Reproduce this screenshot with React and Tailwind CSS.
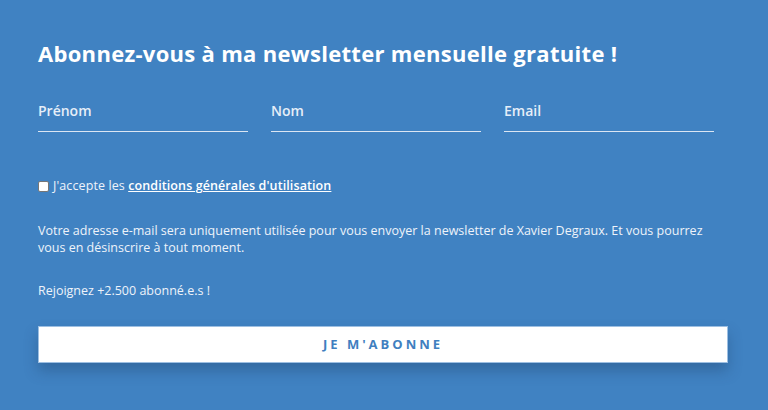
export default function App() {
  return (
    <div className="w-[768px] h-[410px] bg-[#4082c2] text-white overflow-hidden" style={{ fontFamily: '"Open Sans", sans-serif' }}>
      <div className="pl-[38px] pr-[41px] pt-[38px]">
        <h1 className="text-[22px] font-bold leading-[30px] tracking-[0.3px]">Abonnez-vous à ma newsletter mensuelle gratuite !</h1>
        <div className="mt-[26px] flex gap-[23px] pr-[13px]">
          {["Prénom", "Nom", "Email"].map((p) => (
            <div key={p} className="w-[210px] border-b border-[#dbe6f3] pb-[10px] pt-[7px]">
              <span className="text-[14px] font-semibold text-[#e6eef8] leading-[20px] block">{p}</span>
            </div>
          ))}
        </div>
        <div className="mt-[45px] flex items-center gap-[4px] text-[12.5px] leading-[18px]">
          <span className="w-[11px] h-[11px] bg-white border border-[#767676] rounded-[2px] inline-block"></span>
          <span className="text-[#eef3fa] tracking-[0.1px]">J'accepte les <a className="font-semibold underline text-white">conditions générales d'utilisation</a></span>
        </div>
        <p className="mt-[27px] text-[12.5px] leading-[17px] text-[#eef3fa]">
          Votre adresse e-mail sera uniquement utilisée pour vous envoyer la newsletter de Xavier Degraux. Et vous pourrez vous en désinscrire à tout moment.
        </p>
        <p className="mt-[26px] text-[12.5px] leading-[17px] text-[#eef3fa]">Rejoignez +2.500 abonné.e.s !</p>
        <button className="mt-[27px] w-[690px] h-[37px] bg-white border border-[#9dbfe2] shadow-[0_8px_14px_rgba(30,60,100,0.35)] text-[#3f7fc0] text-[13px] font-bold tracking-[3px]">
          JE M'ABONNE
        </button>
      </div>
    </div>
  );
}
